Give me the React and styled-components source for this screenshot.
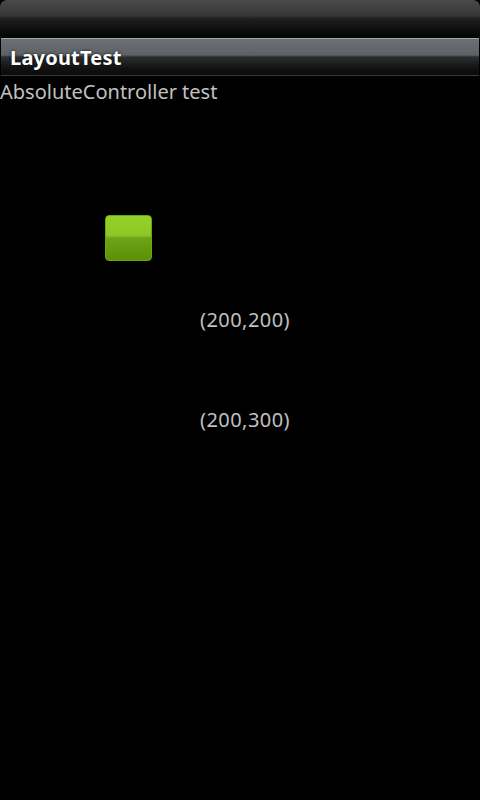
import React from 'react';
import styled, { createGlobalStyle } from 'styled-components';

const GlobalStyle = createGlobalStyle`
  html, body {
    margin: 0;
    padding: 0;
    background: #000;
  }
  body {
    font-family: "Noto Sans", "Open Sans", sans-serif;
  }
`;

const items = [
  { x: 200, y: 309, label: '(200,200)' },
  { x: 200, y: 409, label: '(200,300)' },
];

export default function App() {
  return (
    <Screen>
      <GlobalStyle />
      <StatusBar />
      <TitleBar>
        <Title>LayoutTest</Title>
      </TitleBar>
      <Content>
        <Caption>AbsoluteController test</Caption>
        <GreenButton aria-label="button" />
        {items.map((it) => (
          <Coord key={it.label} style={{ left: it.x, top: it.y - 76 }}>
            {it.label}
          </Coord>
        ))}
      </Content>
    </Screen>
  );
}

const Screen = styled.div`
  display: flex;
  flex-direction: column;
  width: 480px;
  height: 800px;
  background: #000;
  overflow: hidden;
`;

const StatusBar = styled.div`
  height: 38px;
  flex-shrink: 0;
  border-radius: 7px 7px 0 0;
  background: linear-gradient(
    to bottom,
    #4b4b4b 0px,
    #353535 16px,
    #222 18px,
    #0d0d0d 30px,
    #050505 38px
  );
`;

const TitleBar = styled.div`
  height: 36px;
  flex-shrink: 0;
  display: flex;
  align-items: center;
  margin: 0 1px;
  border-top: 1px solid #a3a7aa;
  border-bottom: 1px solid #3a3a3a;
  background: linear-gradient(
    to bottom,
    #6c7075 0px,
    #5e6267 16px,
    #2b2d2f 18px,
    #111 30px,
    #0a0a0a 36px
  );
`;

const Title = styled.div`
  padding-left: 9px;
  padding-top: 1px;
  color: #fff;
  font-weight: bold;
  font-size: 20px;
  letter-spacing: 0.2px;
  text-shadow: 0 0 3px rgba(0, 0, 0, 0.8);
`;

const Content = styled.div`
  position: relative;
  flex: 1;
`;

const Caption = styled.div`
  color: #c0c0c0;
  font-size: 20px;
  line-height: 32px;
`;

const GreenButton = styled.div`
  position: absolute;
  left: 105px;
  top: 139px;
  width: 45px;
  height: 44px;
  border: 1px solid #6aa80c;
  border-radius: 4px;
  background: linear-gradient(
    to bottom,
    #95d12c 0%,
    #8cc725 44%,
    #6ea415 50%,
    #5b900a 100%
  );
`;

const Coord = styled.div`
  position: absolute;
  color: #c0c0c0;
  font-size: 20px;
  line-height: 22px;
  letter-spacing: 0.45px;
`;
